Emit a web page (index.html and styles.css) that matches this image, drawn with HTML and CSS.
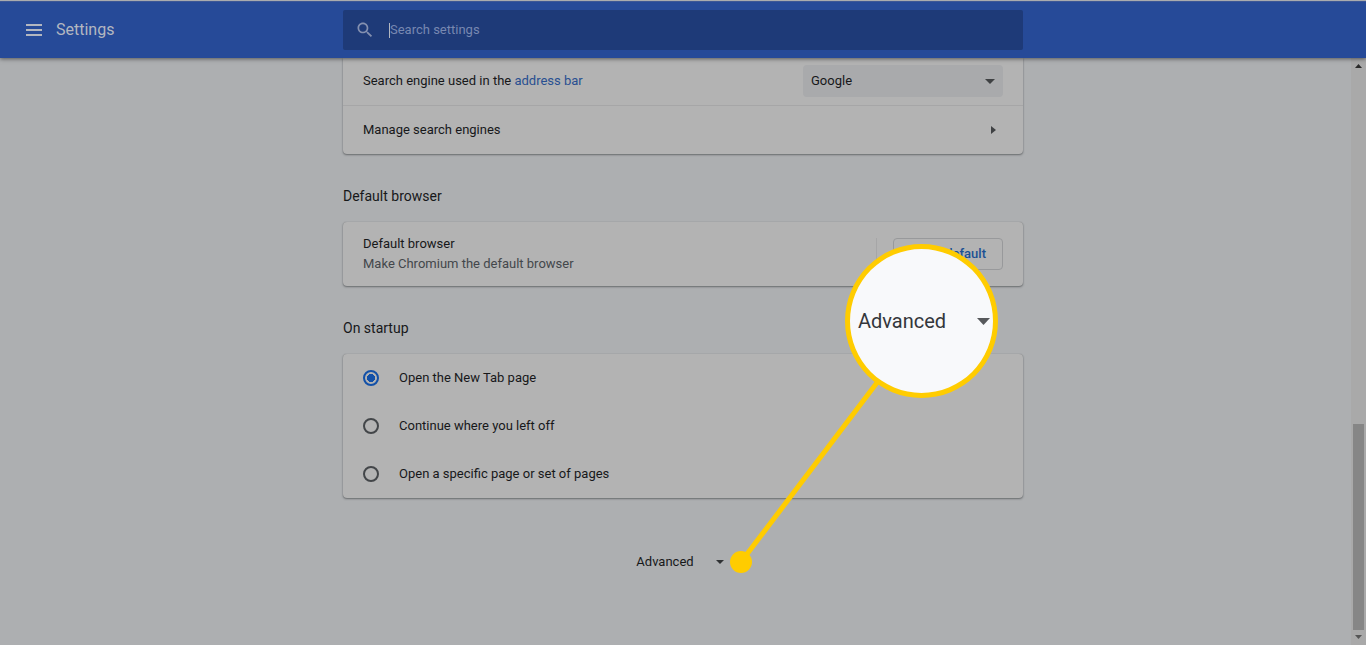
FILE: index.html
```html
<!DOCTYPE html>
<html lang="en">
<head>
<meta charset="utf-8">
<meta name="viewport" content="width=device-width, initial-scale=1">
<title>Settings</title>
<link rel="stylesheet" href="styles.css">
</head>
<body>
<header class="toolbar">
  <div class="brand">
    <button class="menu-button" type="button" aria-label="Main menu">
      <svg width="16" height="12" viewBox="0 0 16 12"><path d="M0 0h16v2H0zM0 5h16v2H0zM0 10h16v2H0z"/></svg>
    </button>
    <h1 class="title">Settings</h1>
  </div>
  <label class="search">
    <svg class="search-icon" width="20" height="20" viewBox="0 0 24 24"><path d="M15.5 14h-.79l-.28-.27C15.41 12.59 16 11.11 16 9.5 16 5.91 13.09 3 9.5 3S3 5.91 3 9.5 5.91 16 9.5 16c1.61 0 3.09-.59 4.23-1.57l.27.28v.79l5 4.99L20.49 19l-4.99-5zm-6 0C7.01 14 5 11.99 5 9.5S7.01 5 9.5 5 14 7.01 14 9.5 11.99 14 9.5 14z"/></svg>
    <span class="caret"></span>
    <input class="search-input" type="search" placeholder="Search settings" aria-label="Search settings">
  </label>
</header>
<div class="page">
  <main class="content">
    <div class="column">
      <section class="card card-first">
        <div class="row row-engine">
          <label for="engine">Search engine used in the <a class="link" href="#">address bar</a></label>
          <div class="select-box">
            <select class="select" id="engine"><option>Google</option></select>
            <svg class="select-arrow" width="10" height="5" viewBox="0 0 10 5"><path d="M0 0h10L5 5z"/></svg>
          </div>
        </div>
        <button class="row row-link" type="button">
          Manage search engines
          <svg class="chevron" width="5" height="8" viewBox="0 0 5 8"><path d="M0 0l5 4-5 4z"/></svg>
        </button>
      </section>

      <h2 class="heading">Default browser</h2>
      <section class="card">
        <div class="row row-browser">
          <div>
            <div>Default browser</div>
            <div class="secondary">Make Chromium the default browser</div>
          </div>
          <div class="action"><button class="outlined" type="button">Make default</button></div>
        </div>
      </section>

      <h2 class="heading">On startup</h2>
      <section class="card">
        <label class="option"><input class="radio" type="radio" name="startup" checked>Open the New Tab page</label>
        <label class="option"><input class="radio" type="radio" name="startup">Continue where you left off</label>
        <label class="option"><input class="radio" type="radio" name="startup">Open a specific page or set of pages</label>
      </section>

      <button class="advanced" type="button">
        Advanced
        <svg width="8" height="4" viewBox="0 0 8 4"><path d="M0 0h8L4 4z"/></svg>
      </button>

      <svg class="pointer" width="680" height="580" viewBox="0 0 680 580">
        <path d="M398 504L536 322" stroke="#fc0" stroke-width="5"/>
        <circle cx="398" cy="504" r="11" fill="#fc0"/>
      </svg>
      <div class="lens">
        <span>Advanced</span>
        <svg width="13" height="7" viewBox="0 0 13 7"><path d="M0 0h13L6.500 7z"/></svg>
      </div>
    </div>
  </main>
  <div class="scrollbar">
    <svg class="scroll-up" width="7" height="4" viewBox="0 0 7 4"><path d="M3.500 0L7 4H0z"/></svg>
    <div class="track"><div class="thumb"></div></div>
    <svg class="scroll-down" width="7" height="4" viewBox="0 0 7 4"><path d="M0 0h7L3.500 4z"/></svg>
  </div>
</div>
</body>
</html>
```
FILE: styles.css
```css
* {
  box-sizing: border-box;
}

body {
  margin: 0;
  min-height: 100vh;
  display: flex;
  flex-direction: column;
  background: #adafb1;
  color: #17181a;
  font: 13px/20px Roboto, "Liberation Sans", sans-serif;
}

button,
input,
select {
  font: inherit;
  color: inherit;
}

button {
  border: 0;
  background: none;
  cursor: pointer;
}

/* Toolbar */
.toolbar {
  position: relative;
  z-index: 1;
  display: grid;
  grid-template-columns: 1fr minmax(0, 680px) 1fr;
  align-items: center;
  height: 58px;
  padding-top: 1px;
  border-top: 1px solid #a9abae;
  background: #264a98;
  box-shadow: inset 0 1px #3c5796, 0 1px 4px rgba(0, 0, 0, 0.5);
}

.brand {
  display: flex;
  align-items: center;
  gap: 14px;
  padding-left: 26px;
  color: #b3b7c0;
}

.menu-button {
  display: flex;
  padding: 0;
  fill: #b3b7c0;
}

.title {
  margin: 0;
  font-size: 16px;
  font-weight: 400;
  line-height: 24px;
}

.search {
  display: flex;
  align-items: center;
  height: 40px;
  padding-left: 12px;
  border-radius: 2px;
  background: #1e3a78;
}

.search-icon {
  fill: #8490b0;
}

.caret {
  width: 1px;
  height: 15px;
  margin-left: 14px;
  background: #b3b7c0;
}

.search-input {
  flex: 1;
  min-width: 0;
  padding: 0;
  border: 0;
  outline: 0;
  background: none;
  color: #b3b7c0;
}

.search-input::placeholder {
  color: #7888b1;
  opacity: 1;
}

/* Page */
.page {
  flex: 1;
  display: flex;
}

.content {
  flex: 1;
  display: flex;
  justify-content: center;
  padding-left: 15px;
}

.column {
  position: relative;
  width: 100%;
  max-width: 680px;
  padding-bottom: 48px;
}

.card {
  border-radius: 4px;
  background: #b3b3b3;
  box-shadow: 0 1px 2px rgba(40, 43, 46, 0.5), 0 0 1px rgba(40, 43, 46, 0.3);
}

.card-first {
  border-radius: 0 0 4px 4px;
}

.row {
  display: flex;
  align-items: center;
  justify-content: space-between;
  width: 100%;
  padding: 0 20px;
}

.row-engine {
  height: 47px;
  padding-bottom: 2px;
}

.row-link {
  height: 49px;
  padding-right: 27px;
  border-top: 1px solid #a6a6a7;
  text-align: left;
}

.row-browser {
  height: 64px;
}

.link {
  color: #284f91;
  text-decoration: none;
}

.select-box {
  position: relative;
  width: 200px;
}

.select {
  display: block;
  width: 100%;
  height: 32px;
  padding: 0 8px;
  border: 0;
  border-radius: 4px;
  appearance: none;
  background: #a9aaac;
}

.select-arrow {
  position: absolute;
  top: 14px;
  right: 8px;
  fill: #3f4143;
}

.chevron {
  fill: #3f4143;
}

.heading {
  margin: 0;
  padding: 32px 0 16px;
  font-size: 14px;
  font-weight: 400;
}

.secondary {
  color: #43474b;
}

.action {
  padding-left: 16px;
  border-left: 1px solid #a6a6a7;
}

.outlined {
  display: block;
  height: 32px;
  padding: 0 16px;
  border: 1px solid #98999b;
  border-radius: 4px;
  color: #1b5093;
  font-weight: 500;
}

.option {
  display: flex;
  align-items: center;
  gap: 20px;
  height: 48px;
  padding: 0 20px;
}

.radio {
  width: 16px;
  height: 16px;
  margin: 0;
  border: 2px solid #434649;
  border-radius: 50%;
  appearance: none;
}

.radio:checked {
  border-color: #1250a8;
  background: radial-gradient(circle, #1250a8 4px, transparent 4px);
}

.advanced {
  display: flex;
  align-items: center;
  gap: 22px;
  height: 32px;
  margin: 48px auto 0;
  padding: 0 12px 0 6px;
  fill: #303234;
}

/* Callout */
.pointer {
  position: absolute;
  top: 0;
  left: 0;
  pointer-events: none;
}

.lens {
  position: absolute;
  top: 186px;
  left: 502px;
  display: flex;
  align-items: center;
  justify-content: space-between;
  width: 153px;
  height: 154px;
  padding: 0 3px 0 8px;
  border: 5px solid #fc0;
  border-radius: 50%;
  background: #f8f9fb;
  color: #34373b;
  font-size: 20px;
  fill: #57595c;
}

/* Scrollbar */
.scrollbar {
  display: flex;
  flex-direction: column;
  align-items: center;
  width: 15px;
  padding: 6px 0;
  background: #a9a9a9;
}

.scroll-up {
  fill: #2a2a2a;
}

.scroll-down {
  fill: #555;
}

.track {
  flex: 1;
  display: flex;
  flex-direction: column;
  justify-content: flex-end;
  width: 11px;
  padding: 5px 0;
}

.thumb {
  height: 37%;
  background: #868686;
}
```
